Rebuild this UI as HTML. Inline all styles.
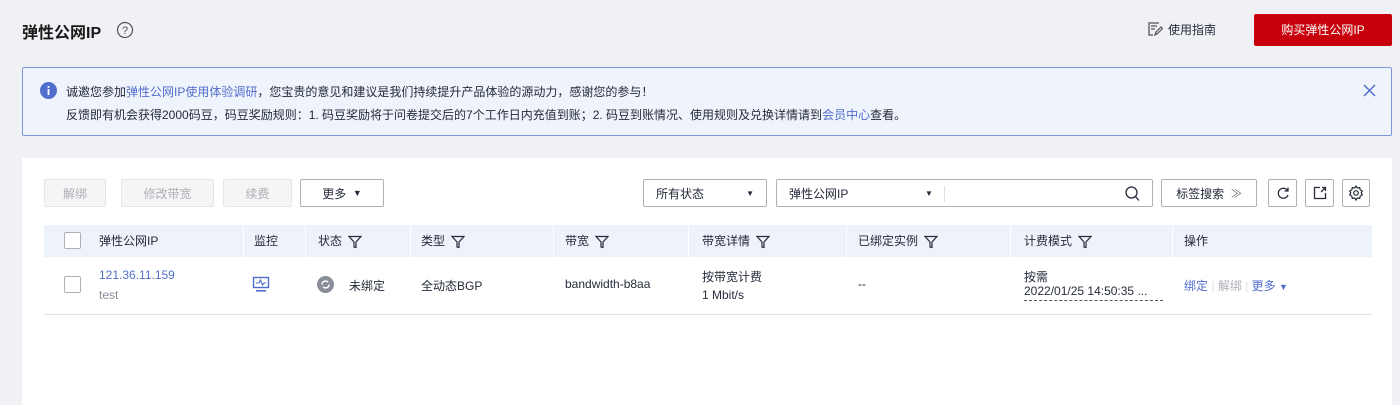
<!DOCTYPE html>
<html><head><meta charset="utf-8"><style>
*{box-sizing:border-box;margin:0;padding:0}
body{width:1400px;height:405px;overflow:hidden;background:#f0f1f5;font-family:"Liberation Sans","Noto Sans CJK SC",sans-serif;font-size:12px;color:#252b3a;position:relative}
.a{position:absolute}
.btn{position:absolute;height:28px;border:1px solid #dfe1e6;border-radius:2px;display:flex;align-items:center;justify-content:center;font-size:12px}
.dis{background:#f5f5f6;color:#adb0b8;border-color:#e4e5e8}
.th{position:absolute;top:225px;height:32px;line-height:32px;font-size:12px;color:#252b3a}
.fl{display:inline-block;vertical-align:middle;margin-left:6px}
.sep{position:absolute;top:225px;width:1px;height:32px;background:#fff}
.blue{color:#526ecc}
</style></head><body>
<div class="a" style="left:22px;top:19px;font-size:16px;font-weight:bold;color:#191919">弹性公网IP</div>
<svg class="a" style="left:116px;top:21px" width="18" height="18" viewBox="0 0 18 18"><circle cx="9" cy="9" r="7.5" fill="none" stroke="#555" stroke-width="1.2"/><text x="9" y="13" text-anchor="middle" font-size="11" fill="#555" font-family="Liberation Sans">?</text></svg>
<svg class="a" style="left:1147px;top:21px" width="16" height="16" viewBox="0 0 16 16"><path d="M12 2H2v12h4M4 5h6M4 8h4" fill="none" stroke="#555" stroke-width="1.3"/><path d="M8 14l1-3 5-5 1.5 1.5-5 5z" fill="none" stroke="#555" stroke-width="1.2"/></svg>
<div class="a" style="left:1168px;top:21px;font-size:12px;color:#252b3a">使用指南</div>
<div class="a" style="left:1254px;top:14px;width:138px;height:32px;background:#c7000b;border-radius:2px;color:#fff;font-size:12px;text-align:center;line-height:32px">购买弹性公网IP</div>
<div class="a" style="left:22px;top:67px;width:1370px;height:69px;background:#eff3fc;border:1px solid #7d97dd;border-radius:2px"></div>
<svg class="a" style="left:40px;top:82px" width="17" height="17" viewBox="0 0 17 17"><circle cx="8.5" cy="8.5" r="8.5" fill="#526ecc"/><rect x="7.6" y="7" width="1.8" height="6" fill="#fff"/><rect x="7.6" y="4" width="1.8" height="1.8" fill="#fff"/></svg>
<div class="a" style="left:66px;top:83px">诚邀您参加<span class="blue">弹性公网IP使用体验调研</span>，您宝贵的意见和建议是我们持续提升产品体验的源动力，感谢您的参与！</div>
<div class="a" style="left:66px;top:106px">反馈即有机会获得2000码豆，码豆奖励规则：1. 码豆奖励将于问卷提交后的7个工作日内充值到账；2. 码豆到账情况、使用规则及兑换详情请到<span class="blue">会员中心</span>查看。</div>
<svg class="a" style="left:1363px;top:84px" width="13" height="13" viewBox="0 0 13 13"><path d="M1 1l11 11M12 1L1 12" stroke="#526ecc" stroke-width="1.5"/></svg>
<div class="a" style="left:22px;top:158px;width:1370px;height:247px;background:#fff"></div>
<div class="btn dis" style="left:44px;top:179px;width:62px">解绑</div>
<div class="btn dis" style="left:121px;top:179px;width:93px">修改带宽</div>
<div class="btn dis" style="left:223px;top:179px;width:69px">续费</div>
<div class="btn" style="left:300px;top:179px;width:84px;border-color:#adb0b8">更多 &nbsp;<span style="font-size:9px">▼</span></div>
<div class="btn" style="left:643px;top:179px;width:124px;border-color:#adb0b8;justify-content:space-between;padding:0 12px"><span>所有状态</span><span style="font-size:8px">▼</span></div>
<div class="btn" style="left:776px;top:179px;width:377px;border-color:#adb0b8;justify-content:flex-start;padding:0 12px"><span>弹性公网IP</span><span style="font-size:8px;position:absolute;left:148px">▼</span><span style="position:absolute;left:167px;top:6px;width:1px;height:16px;background:#dfe1e6"></span>
<svg style="position:absolute;right:12px;top:6px" width="15" height="16" viewBox="0 0 15 16"><circle cx="6.5" cy="6.5" r="5.5" fill="none" stroke="#252b3a" stroke-width="1.3"/><path d="M10.5 10.5l3.5 4" stroke="#252b3a" stroke-width="1.3"/></svg></div>
<div class="btn" style="left:1161px;top:179px;width:96px;border-color:#adb0b8">标签搜索 &nbsp;<span style="color:#666;font-size:11px">≫</span></div>
<div class="btn" style="left:1268px;top:179px;width:29px;border-color:#adb0b8"><svg width="14" height="14" viewBox="0 0 14 14"><path d="M11.5 4.5A5 5 0 1 0 12 9" fill="none" stroke="#252b3a" stroke-width="1.3"/><path d="M12 1.5v3.5H8.5" fill="none" stroke="#252b3a" stroke-width="1.3"/></svg></div>
<div class="btn" style="left:1305px;top:179px;width:29px;border-color:#adb0b8"><svg width="14" height="14" viewBox="0 0 14 14"><path d="M7 1.5H1.5v11h11V7" fill="none" stroke="#252b3a" stroke-width="1.3"/><path d="M9 1.5h3.5V5M12.5 1.5L8 6" fill="none" stroke="#252b3a" stroke-width="1.3"/></svg></div>
<div class="btn" style="left:1342px;top:179px;width:28px;border-color:#adb0b8"><svg width="16" height="16" viewBox="0 0 16 16"><path d="M8 1l1.3 2 2.4-.4.5 2.3 2.1 1.2L13.2 8l1.1 1.9-2.1 1.2-.5 2.3-2.4-.4L8 15l-1.3-2-2.4.4-.5-2.3-2.1-1.2L2.8 8 1.7 6.1l2.1-1.2.5-2.3 2.4.4z" fill="none" stroke="#252b3a" stroke-width="1.2"/><circle cx="8" cy="8" r="2.3" fill="none" stroke="#252b3a" stroke-width="1.2"/></svg></div>
<div class="a" style="left:44px;top:225px;width:1328px;height:32px;background:#eef2fa"></div>
<div class="sep" style="left:243px"></div><div class="sep" style="left:305px"></div><div class="sep" style="left:410px"></div><div class="sep" style="left:553px"></div><div class="sep" style="left:688px"></div><div class="sep" style="left:846px"></div><div class="sep" style="left:1010px"></div><div class="sep" style="left:1172px"></div>
<div class="a" style="left:64px;top:232px;width:17px;height:17px;border:1px solid #adb0b8;border-radius:2px;background:#fff"></div>
<div class="th" style="left:99px">弹性公网IP</div>
<div class="th" style="left:254px">监控</div>
<div class="th" style="left:318px">状态<svg class="fl" width="14" height="14" viewBox="0 0 14 14"><path d="M1 1.5h12L8 7v5.5L6 12V7z" fill="none" stroke="#252b3a" stroke-width="1.2"/></svg></div>
<div class="th" style="left:421px">类型<svg class="fl" width="14" height="14" viewBox="0 0 14 14"><path d="M1 1.5h12L8 7v5.5L6 12V7z" fill="none" stroke="#252b3a" stroke-width="1.2"/></svg></div>
<div class="th" style="left:565px">带宽<svg class="fl" width="14" height="14" viewBox="0 0 14 14"><path d="M1 1.5h12L8 7v5.5L6 12V7z" fill="none" stroke="#252b3a" stroke-width="1.2"/></svg></div>
<div class="th" style="left:702px">带宽详情<svg class="fl" width="14" height="14" viewBox="0 0 14 14"><path d="M1 1.5h12L8 7v5.5L6 12V7z" fill="none" stroke="#252b3a" stroke-width="1.2"/></svg></div>
<div class="th" style="left:858px">已绑定实例<svg class="fl" width="14" height="14" viewBox="0 0 14 14"><path d="M1 1.5h12L8 7v5.5L6 12V7z" fill="none" stroke="#252b3a" stroke-width="1.2"/></svg></div>
<div class="th" style="left:1024px">计费模式<svg class="fl" width="14" height="14" viewBox="0 0 14 14"><path d="M1 1.5h12L8 7v5.5L6 12V7z" fill="none" stroke="#252b3a" stroke-width="1.2"/></svg></div>
<div class="th" style="left:1184px">操作</div>
<div class="a" style="left:64px;top:276px;width:17px;height:17px;border:1px solid #adb0b8;border-radius:2px"></div>
<div class="a blue" style="left:99px;top:268px">121.36.11.159</div>
<div class="a" style="left:99px;top:288px;color:#8a8e99">test</div>
<svg class="a" style="left:252px;top:276px" width="18" height="17" viewBox="0 0 18 17"><rect x="1.5" y="1.5" width="15" height="10" fill="none" stroke="#526ecc" stroke-width="1.4"/><path d="M4 7h3l1.5-3 2 5 1.5-2h2" fill="none" stroke="#526ecc" stroke-width="1.1"/><rect x="4" y="14" width="10" height="1.6" fill="#526ecc"/></svg>
<svg class="a" style="left:317px;top:276px" width="17" height="17" viewBox="0 0 17 17"><circle cx="8.5" cy="8.5" r="8.5" fill="#8a8e99"/><path d="M5 8.5a3.5 3.5 0 0 1 6-2.4M12 8.5a3.5 3.5 0 0 1-6 2.4" fill="none" stroke="#fff" stroke-width="1.4"/></svg>
<div class="a" style="left:349px;top:277px">未绑定</div>
<div class="a" style="left:421px;top:277px">全动态BGP</div>
<div class="a" style="left:565px;top:277px">bandwidth-b8aa</div>
<div class="a" style="left:702px;top:268px">按带宽计费</div>
<div class="a" style="left:702px;top:288px">1 Mbit/s</div>
<div class="a" style="left:858px;top:277px">--</div>
<div class="a" style="left:1024px;top:268px">按需</div>
<div class="a" style="left:1024px;top:284px;border-bottom:1px dashed #555;padding-bottom:2px;width:139px">2022/01/25 14:50:35 ...</div>
<div class="a" style="left:1184px;top:277px"><span class="blue">绑定</span> <span style="color:#dfe1e6">|</span> <span style="color:#adb0b8">解绑</span> <span style="color:#dfe1e6">|</span> <span class="blue">更多 <span style="font-size:9px">▼</span></span></div>
<div class="a" style="left:44px;top:314px;width:1328px;height:1px;background:#dfe1e6"></div>
</body></html>
